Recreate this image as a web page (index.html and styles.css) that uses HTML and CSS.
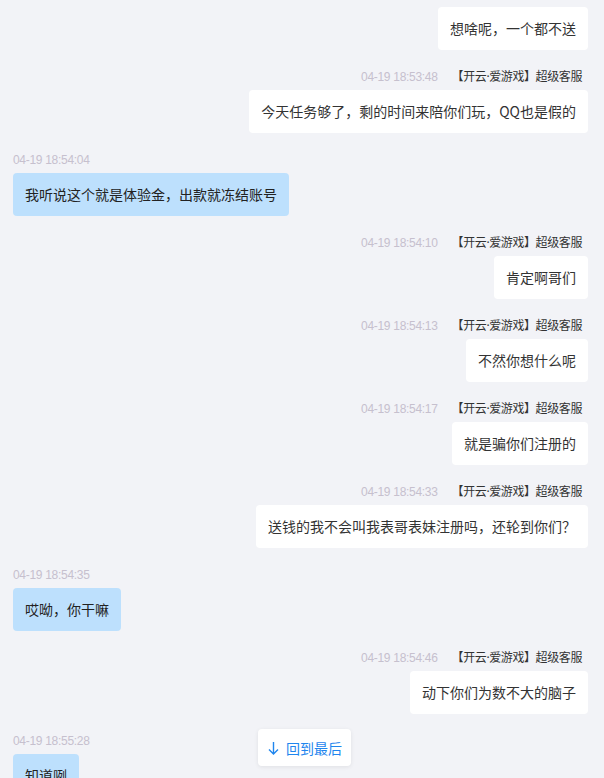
FILE: index.html
```html
<!doctype html>
<html>
	<head>
		<meta charset="utf-8">
		<title>客服消息</title>
		<link rel="stylesheet" href="styles.css">
	</head>
	<body>
		<div id="chat">
			<div class="msg mine first">
				<div class="bubble">想啥呢，一个都不送</div>
			</div>
			<div class="msg mine">
				<div class="meta"><span class="time">04-19 18:53:48</span><span class="name">【开云·爱游戏】超级客服</span></div>
				<div class="bubble">今天任务够了，剩的时间来陪你们玩，QQ也是假的</div>
			</div>
			<div class="msg theirs">
				<div class="meta"><span class="time">04-19 18:54:04</span></div>
				<div class="bubble">我听说这个就是体验金，出款就冻结账号</div>
			</div>
			<div class="msg mine">
				<div class="meta"><span class="time">04-19 18:54:10</span><span class="name">【开云·爱游戏】超级客服</span></div>
				<div class="bubble">肯定啊哥们</div>
			</div>
			<div class="msg mine">
				<div class="meta"><span class="time">04-19 18:54:13</span><span class="name">【开云·爱游戏】超级客服</span></div>
				<div class="bubble">不然你想什么呢</div>
			</div>
			<div class="msg mine">
				<div class="meta"><span class="time">04-19 18:54:17</span><span class="name">【开云·爱游戏】超级客服</span></div>
				<div class="bubble">就是骗你们注册的</div>
			</div>
			<div class="msg mine">
				<div class="meta"><span class="time">04-19 18:54:33</span><span class="name">【开云·爱游戏】超级客服</span></div>
				<div class="bubble">送钱的我不会叫我表哥表妹注册吗，还轮到你们？</div>
			</div>
			<div class="msg theirs">
				<div class="meta"><span class="time">04-19 18:54:35</span></div>
				<div class="bubble">哎呦，你干嘛</div>
			</div>
			<div class="msg mine">
				<div class="meta"><span class="time">04-19 18:54:46</span><span class="name">【开云·爱游戏】超级客服</span></div>
				<div class="bubble">动下你们为数不大的脑子</div>
			</div>
			<div class="msg theirs">
				<div class="meta"><span class="time">04-19 18:55:28</span></div>
				<div class="bubble">知道咧</div>
			</div>
		</div>
		<a id="toBottom" href="#">
			<svg width="11" height="14" viewBox="0 0 11 14"><path d="M5.5 1v12M1 8.5l4.5 4.5 4.5-4.5" fill="none" stroke="#1f86ee" stroke-width="1.4"/></svg>
			<span>回到最后</span>
		</a>
	</body>
</html>
```
FILE: styles.css
```css
html, body {
	margin : 0;
	height : 100%;
	overflow : hidden;
}
body {
	background-color : #f2f3f7;
	font-family : "Noto Sans CJK SC", "Liberation Sans", sans-serif;
	font-size : 14px;
	color : #333;
}
#chat {
	display : flex;
	flex-direction : column;
	padding : 7px 16px 0 13px;
}
div.msg {
	display : flex;
	flex-direction : column;
	margin-bottom : 19px;
}
div.msg.mine {
	align-items : flex-end;
}
div.msg.theirs {
	align-items : flex-start;
}
div.meta {
	display : flex;
	gap : 14px;
	height : 16px;
	line-height : 16px;
	font-size : 12px;
	margin-bottom : 5px;
	white-space : nowrap;
}
div.msg.mine div.meta {
	margin-right : 6px;
}
span.time {
	color : #c6c0ce;
	font-family : "Liberation Sans", sans-serif;
	letter-spacing : -0.3px;
}
span.name {
	color : #333;
	font-family : "Noto Sans", "Noto Sans CJK SC", sans-serif;
	letter-spacing : -0.4px;
}
div.bubble {
	line-height : 19px;
	padding : 12px;
	border-radius : 4px;
	background-color : #fff;
	color : #333;
}
div.msg.theirs div.bubble {
	background-color : #bde0fd;
	color : #222;
}
#toBottom {
	position : absolute;
	left : 258px;
	bottom : 12px;
	display : flex;
	align-items : center;
	gap : 7px;
	height : 37px;
	padding : 0 9px 0 10px;
	box-sizing : border-box;
	white-space : nowrap;
	background-color : #fff;
	border-radius : 4px;
	box-shadow : 0 1px 4px rgba(0,0,0,0.08);
	color : #1f86ee;
	text-decoration : none;
	font-size : 14px;
}
```
